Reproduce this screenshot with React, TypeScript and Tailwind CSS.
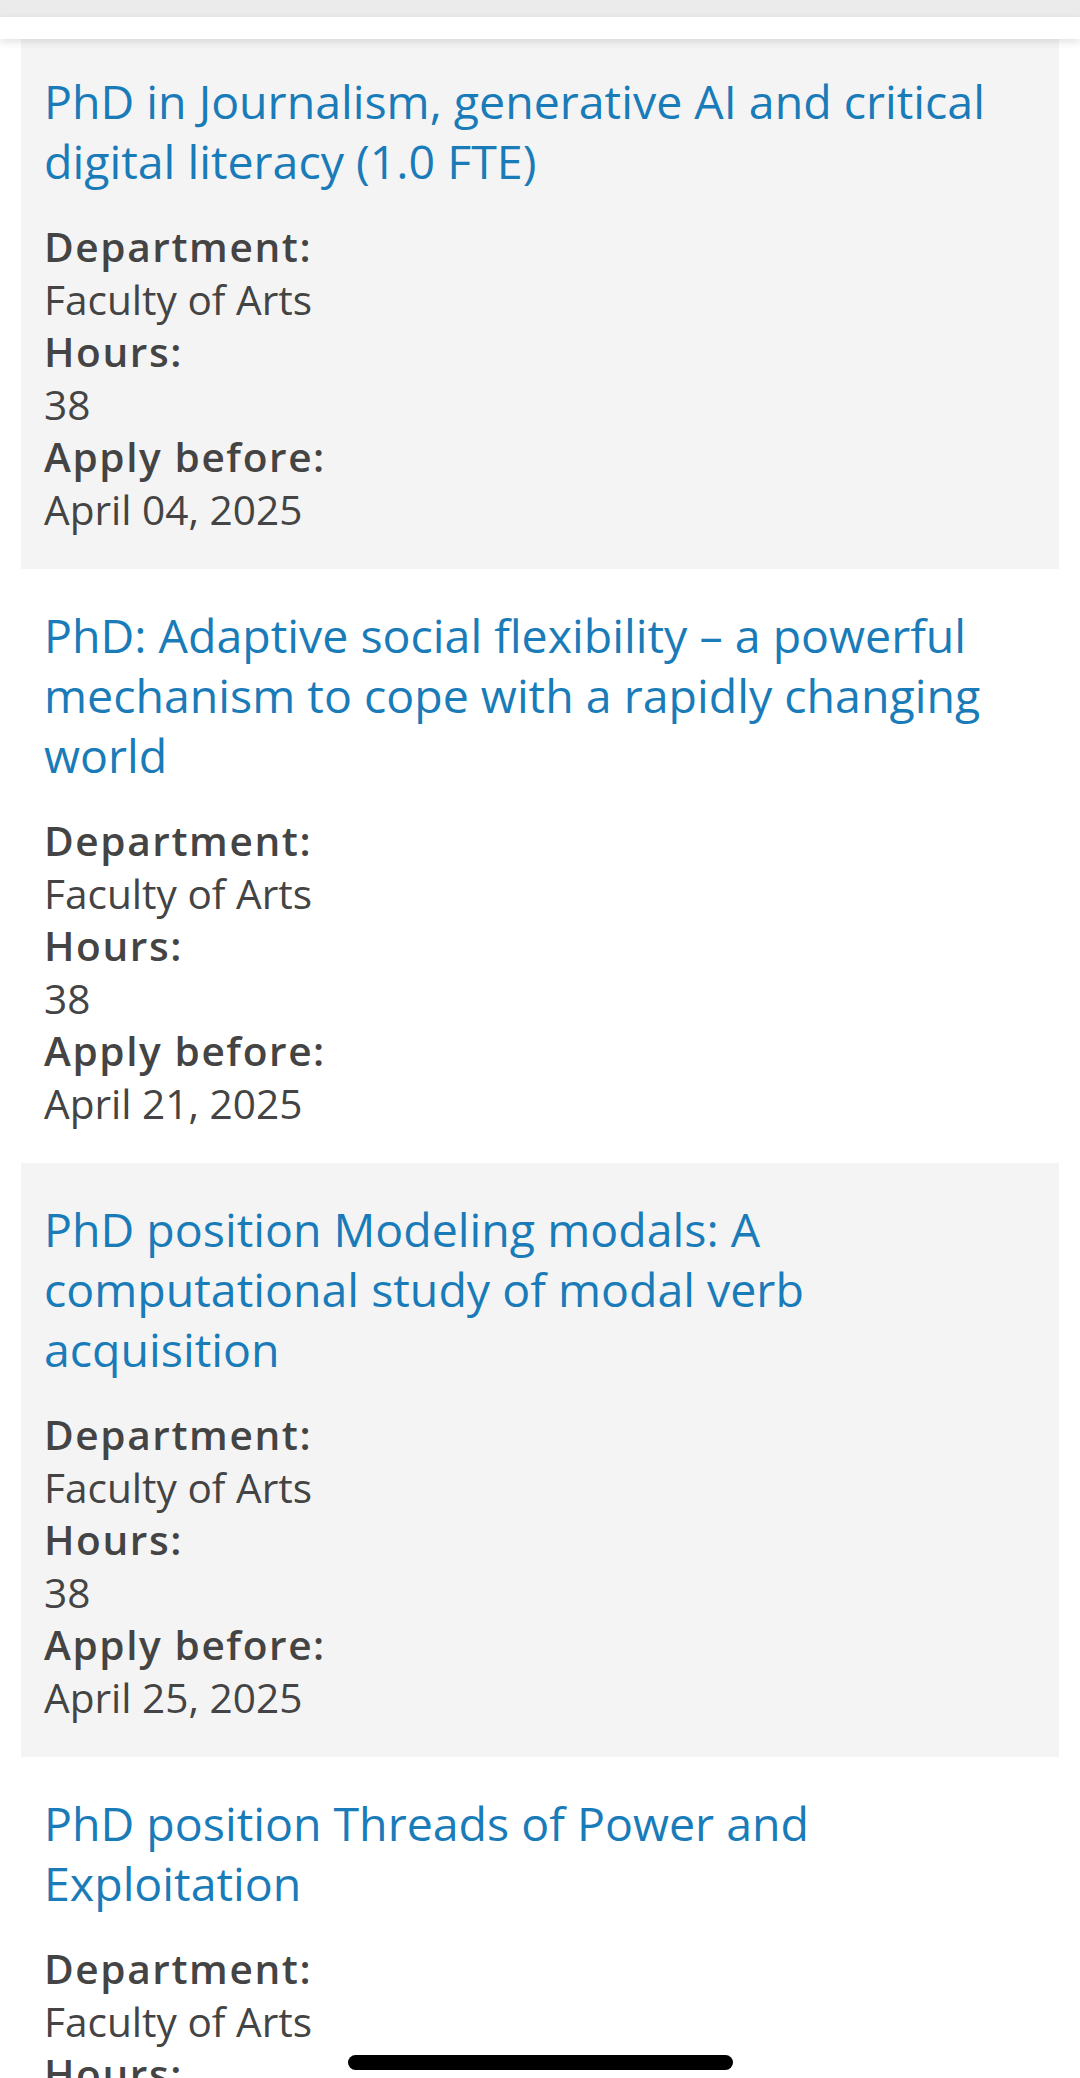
import React from 'react';

type Vacancy = {
  title: string;
  department: string;
  hours: string;
  deadline: string;
};

const vacancies: Vacancy[] = [
  {
    title: 'PhD in Journalism, generative AI and critical digital literacy (1.0 FTE)',
    department: 'Faculty of Arts',
    hours: '38',
    deadline: 'April 04, 2025',
  },
  {
    title: 'PhD: Adaptive social flexibility \u2013 a powerful mechanism to cope with a rapidly changing world',
    department: 'Faculty of Arts',
    hours: '38',
    deadline: 'April 21, 2025',
  },
  {
    title: 'PhD position Modeling modals: A computational study of modal verb acquisition',
    department: 'Faculty of Arts',
    hours: '38',
    deadline: 'April 25, 2025',
  },
  {
    title: 'PhD position Threads of Power and Exploitation',
    department: 'Faculty of Arts',
    hours: '38',
    deadline: 'May 01, 2025',
  },
];

function VacancyCard({ vacancy, shaded, first }: { vacancy: Vacancy; shaded: boolean; first: boolean }) {
  return (
    <div
      className={`mx-[21px] px-[23px] pb-[33px] ${first ? 'pt-[32px]' : 'pt-[36px]'} ${shaded ? 'bg-[#f4f4f4]' : 'bg-white'}`}
    >
      {/* Titel */}
      <a href="#" className="block text-[46.5px] leading-[60px] text-[#1a7bb9]">
        {vacancy.title}
      </a>

      {/* Gegevens */}
      <dl className="mt-[30px] text-[40.6px] leading-[52.5px] text-[#444444]">
        <dt className="font-semibold tracking-[1.6px]">Department:</dt>
        <dd>{vacancy.department}</dd>
        <dt className="font-semibold tracking-[1.6px]">Hours:</dt>
        <dd>{vacancy.hours}</dd>
        <dt className="font-semibold tracking-[1.6px]">Apply before:</dt>
        <dd>{vacancy.deadline}</dd>
      </dl>
    </div>
  );
}

export default function App() {
  return (
    <div className="relative h-[2078px] overflow-hidden bg-white font-['Open_Sans',sans-serif]">
      {/* Browser balk */}
      <div className="h-[17px] bg-[#ebebeb]" />
      <div className="relative z-10 h-[22px] bg-white shadow-[0_3px_8px_rgba(0,0,0,0.12)]" />

      <div className="flex flex-col">
        {vacancies.map((v, i) => (
          <VacancyCard key={v.title} vacancy={v} shaded={i % 2 === 0} first={i === 0} />
        ))}
      </div>

      {/* Home indicator */}
      <div className="absolute bottom-[8px] left-[348px] h-[15px] w-[385px] rounded-full bg-black" />
    </div>
  );
}
